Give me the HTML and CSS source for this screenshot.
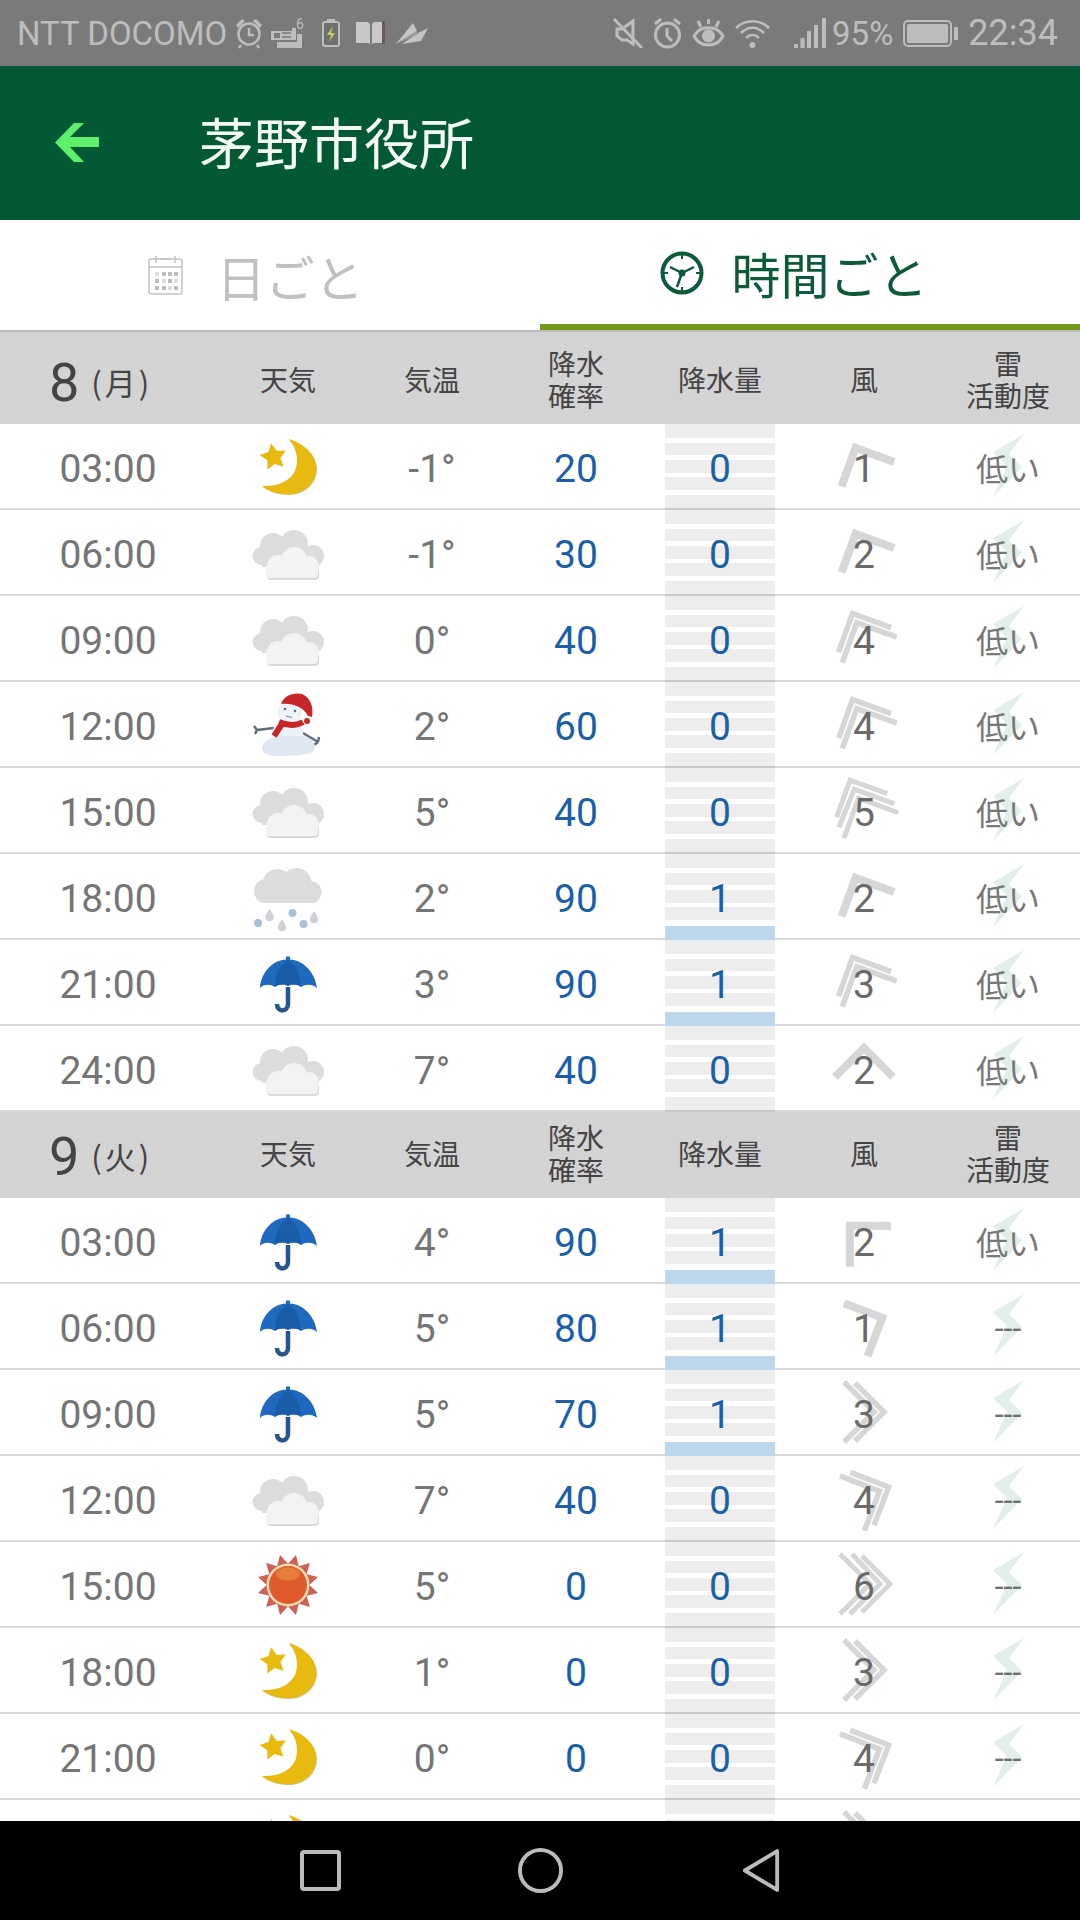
FILE: index.html
```html
<!DOCTYPE html>
<html lang="ja">
<head>
<meta charset="utf-8">
<title>茅野市役所</title>
<link rel="stylesheet" href="styles.css">
</head>
<body>
<!-- Shared icon sprite -->
<svg class="sprite" xmlns="http://www.w3.org/2000/svg">
  <symbol id="w-moon" viewBox="0 0 80 72">
    <path fill="#d9bd62" d="M41 9C60 15 69 27 69 38C69 53 56 64 41 64C31 64 21 61 15 56C31 57 43 51 48 41C52 31 50 18 41 9Z"/>
    <path fill="#e8b90f" d="M41 8C60 14 68 26 68 37C68 52 55 63 40 63C30 63 20 60 14 55C30 56 42 50 47 40C51 30 49 17 41 8Z"/>
    <polygon fill="#e8b90f" points="23.1,12.2 28.6,19.7 37.9,19.4 32.4,27 35.6,35.7 26.7,32.9 19.4,38.6 19.3,29.3 11.6,24.1 20.5,21.1"/>
  </symbol>
  <symbol id="w-cloud" viewBox="0 0 80 72">
    <g fill="#dcdcdc">
      <circle cx="13.5" cy="39" r="9"/><circle cx="25" cy="29" r="13"/><circle cx="46" cy="27" r="14"/><circle cx="65" cy="39" r="11"/>
      <rect x="14" y="30" width="50" height="20"/>
    </g>
    <g fill="#dadada" transform="translate(1 2)">
      <rect x="18" y="48" width="52" height="13" rx="4"/>
    </g>
    <g fill="#f3f3f3">
      <circle cx="30" cy="49" r="11"/><circle cx="46" cy="43" r="13"/><circle cx="61" cy="49" r="10"/>
      <rect x="18" y="46" width="52" height="15" rx="4"/>
    </g>
  </symbol>
  <symbol id="w-rain" viewBox="0 0 80 72">
    <g fill="#dcdcdc">
      <circle cx="18" cy="30" r="12"/><circle cx="29" cy="22" r="14"/><circle cx="48.500" cy="22" r="15"/><circle cx="62.500" cy="31" r="11"/>
      <rect x="8" y="26" width="64" height="16" rx="8"/>
    </g>
    <circle cx="10" cy="62" r="4" fill="#a9c0d6"/>
    <path d="M21.500 48l3.800 6a4.300 4.300 0 1 1-7.600 0z" fill="#cfcfd6"/>
    <path d="M34 58l3.800 6a4.300 4.300 0 1 1-7.600 0z" fill="#cfcfd6"/>
    <circle cx="44.500" cy="52" r="4" fill="#a9c0d6"/>
    <circle cx="55.500" cy="63" r="4" fill="#a9c0d6"/>
    <path d="M66 50l3.800 6a4.300 4.300 0 1 1-7.600 0z" fill="#cfcfd6"/>
  </symbol>
  <symbol id="w-snow" viewBox="0 0 80 72">
    <path d="M9 41l17-2M9 41l-3-4M9 41l-2 4M55 44l15 9M70 53l1-5M70 53l-4 3" fill="none" stroke="#626d7c" stroke-width="2.500"/>
    <circle cx="40" cy="43" r="15" fill="#edf2f8"/>
    <path fill="#dfe8f2" d="M14 60C14 53 22 48 32 47L54 47C62 48 67 53 67 58C67 64 60 65 52 66C40 67 30 68 22 66C17 65 14 63 14 60Z"/>
    <circle cx="42" cy="23" r="12" fill="#eef3f8"/>
    <circle cx="37" cy="20" r="1.300" fill="#5b6b7e"/><circle cx="47" cy="22" r="1.300" fill="#5b6b7e"/>
    <path d="M38 27l6 1.500" stroke="#7c8794" stroke-width="1.200"/>
    <path fill="#c62828" d="M33 15C36 6 46 3 54 5C62 8 66 18 64 28L60 27C56 19 46 14 33 15Z"/>
    <circle cx="59" cy="32" r="3" fill="#c62828"/>
    <path d="M31 33C40 37 48 37 55 33M34 35L26 47" fill="none" stroke="#c62828" stroke-width="6"/>
  </symbol>
  <symbol id="w-umbrella" viewBox="0 0 80 72">
    <path d="M40 40V57C40 65 29 66 29 57" fill="none" stroke="#27568f" stroke-width="4.500"/>
    <path fill="#1f6abf" d="M12 41C13 25 25 13 38 12.500V9.500H42V12.500C55 13 67 25 69 41C64 37 58 37 53 40C49 37 44 37 40 39C36 37 31 37 27 40C22 37 16 37 12 41Z"/>
    <path fill="#1a5ca8" d="M40 13C33 16 27 27 27 40C31 37 36 37 40 39C44 37 49 37 53 40C53 27 47 16 40 13Z"/>
  </symbol>
  <symbol id="w-sun" viewBox="0 0 80 72">
    <g fill="#cf6058">
      <polygon points="34,16 46,16 40,5" transform="rotate(15 40 36)"/><polygon points="34,16 46,16 40,5" transform="rotate(45 40 36)"/>
      <polygon points="34,16 46,16 40,5" transform="rotate(75 40 36)"/><polygon points="34,16 46,16 40,5" transform="rotate(105 40 36)"/>
      <polygon points="34,16 46,16 40,5" transform="rotate(135 40 36)"/><polygon points="34,16 46,16 40,5" transform="rotate(165 40 36)"/>
      <polygon points="34,16 46,16 40,5" transform="rotate(195 40 36)"/><polygon points="34,16 46,16 40,5" transform="rotate(225 40 36)"/>
      <polygon points="34,16 46,16 40,5" transform="rotate(255 40 36)"/><polygon points="34,16 46,16 40,5" transform="rotate(285 40 36)"/>
      <polygon points="34,16 46,16 40,5" transform="rotate(315 40 36)"/><polygon points="34,16 46,16 40,5" transform="rotate(345 40 36)"/>
    </g>
    <circle cx="40" cy="36" r="21.500" fill="#f9dcae"/>
    <circle cx="40" cy="36" r="19" fill="#df5a2d"/>
    <ellipse cx="40" cy="25" rx="12" ry="6.500" fill="#e67c3a"/>
  </symbol>
  <symbol id="wind-1" viewBox="-45 -45 90 90">
    <polyline points="-29,9 0,-20 29,9" fill="none" stroke="#d6d6d6" stroke-width="8"/>
  </symbol>
  <symbol id="wind-2" viewBox="-45 -45 90 90">
    <g fill="none" stroke="#d6d6d6" stroke-width="5.500">
      <polyline points="-29,2 0,-27 29,2"/><polyline points="-30,13 0,-17 30,13"/>
    </g>
  </symbol>
  <symbol id="wind-3" viewBox="-45 -45 90 90">
    <g fill="none" stroke="#d6d6d6" stroke-width="5">
      <polyline points="-28,-5 0,-33 28,-5"/><polyline points="-30,5 0,-23 30,7"/><polyline points="-30,17 0,-13 30,17"/>
    </g>
  </symbol>
  <symbol id="bolt" viewBox="0 0 32 64">
    <polygon points="32,0 1,18 15,32 1,63 30,33 17,20" fill="#e2efe9"/>
  </symbol>
</svg>

<div class="status">
  <div class="status-side">
    <span class="carrier">NTT DOCOMO</span>
    <svg class="st-alarm" viewBox="0 0 28 32"><g fill="none" stroke="#bdbdbd" stroke-width="2.500"><circle cx="14" cy="17" r="10.500"/><path d="M14 11v7h5"/><path d="M6 28l-2 3M22 28l2 3"/></g><path d="M1 8l6-6 3 2-7 7zM27 8l-6-6-3 2 7 7z" fill="#bdbdbd"/></svg>
    <svg class="st-printer" viewBox="0 0 33 30"><path d="M0 13h21v-3h4v12H0z" fill="#bdbdbd"/><rect x="3" y="15" width="6" height="5" fill="#7a7a7a"/><path d="M11 15h9M11 19h9" stroke="#7a7a7a" stroke-width="1.500"/><rect x="6" y="24" width="25" height="6" fill="#bdbdbd"/><rect x="26" y="16" width="5" height="8" fill="#bdbdbd"/><text x="25" y="11" class="st-six">6</text></svg>
    <svg class="st-charge" viewBox="0 0 36 28"><rect x="11" y="3" width="16" height="24" rx="2" fill="#6f6f6f" stroke="#bdbdbd" stroke-width="2"/><rect x="15" y="0" width="8" height="3" fill="#bdbdbd"/><path d="M21 7l-6 9h4l-2 7 6-9h-4z" fill="#c5d04e"/></svg>
    <svg class="st-book" viewBox="0 0 29 24"><path d="M0 1h12l2 2v20l-2-1H0zM16 3l2-2h8v21H18l-2 1z" fill="#c8c8c8"/><path d="M26 0h3v23h-3z" fill="#6f5a50"/></svg>
    <svg class="st-plane" viewBox="0 0 35 23"><path d="M3 22L20 1l4 8zM9 22L25 11l10-5-7 13z" fill="#c4c4c4"/><path d="M3 22l22-10-1-3z" fill="#9a9a9a"/></svg>
  </div>
  <div class="status-side">
    <svg class="st-mute" viewBox="0 0 30 30"><g fill="none" stroke="#bdbdbd" stroke-width="3"><path d="M1 1l28 29"/><path d="M4 11h5l11-8v23l-6-4H9l-5-4z"/></g></svg>
    <svg class="st-alarm2" viewBox="0 0 29 31"><g fill="none" stroke="#bdbdbd" stroke-width="3"><circle cx="14.500" cy="17" r="12"/><path d="M14 10v8l5 5"/><path d="M2 6l6-5M27 6l-6-5"/></g></svg>
    <svg class="st-eye" viewBox="0 0 33 29"><g fill="none" stroke="#bdbdbd" stroke-width="3"><path d="M2 17C8 6 25 6 31 17C25 29 8 29 2 17Z"/><path d="M6 2l3 6M27 2l-3 6M16.500 0v5"/></g><circle cx="16.500" cy="17" r="6.500" fill="#bdbdbd"/></svg>
    <svg class="st-wifi" viewBox="0 0 35 29"><g fill="none" stroke="#bdbdbd" stroke-width="2.500"><path d="M1 9C10 0 25 0 34 9"/><path d="M6 14C13 7 22 7 29 14"/><path d="M11 19C15 15 20 15 24 19"/></g><circle cx="17.500" cy="26" r="3" fill="#bdbdbd"/></svg>
    <svg class="st-signal" viewBox="0 0 32 30"><g fill="#bdbdbd"><rect x="0" y="26" width="4" height="4"/><rect x="6.500" y="20" width="4" height="10"/><rect x="13" y="13" width="4" height="17"/><rect x="20" y="7" width="4" height="23"/><rect x="28" y="0" width="4" height="30"/></g></svg>
    <span class="st-pct">95%</span>
    <svg class="st-batt" viewBox="0 0 55 27"><rect x="1" y="1" width="47" height="25" rx="4" fill="none" stroke="#bdbdbd" stroke-width="2"/><rect x="4" y="4" width="41" height="19" rx="2" fill="#bdbdbd"/><rect x="51" y="7" width="4" height="13" fill="#bdbdbd"/></svg>
    <span class="clock">22:34</span>
  </div>
</div>

<header class="appbar">
  <svg class="back" viewBox="0 0 44 39"><polygon points="0,19.500 19,0 29,0 15,14 44,14 44,24 15,24 29,39 19,39" fill="#5ef06a"/></svg>
  <h1 class="place">茅野市役所</h1>
</header>

<nav class="tabs">
  <div class="tab tab-day">
    <svg class="tab-cal" viewBox="0 0 35 40"><g fill="none" stroke="#c2c2c2" stroke-width="1.500"><rect x="1" y="4" width="33" height="35" rx="2"/><path d="M1 12h33M8 1v7M27 1v7M12 4h11"/></g><g fill="#bdbdbd"><rect x="7" y="17" width="4" height="4" fill="#dedede"/><rect x="14" y="17" width="4" height="4"/><rect x="20" y="17" width="4" height="4"/><rect x="26" y="17" width="4" height="4"/><rect x="7" y="24" width="4" height="4"/><rect x="14" y="24" width="4" height="4" fill="#dedede"/><rect x="20" y="24" width="4" height="4"/><rect x="26" y="24" width="4" height="4" fill="#dedede"/><rect x="7" y="31" width="4" height="4"/><rect x="14" y="31" width="4" height="4"/><rect x="20" y="31" width="4" height="4" fill="#dedede"/><rect x="26" y="31" width="4" height="4"/></g></svg>
    <span class="tab-label">日ごと</span>
  </div>
  <div class="tab tab-hour">
    <svg class="tab-clock" viewBox="0 0 44 44"><circle cx="22" cy="22" r="19.500" fill="none" stroke="#0b5a38" stroke-width="4"/><path d="M22 22L10 16M22 22L34 16M22 22L17 36" stroke="#0b5a38" stroke-width="2.500"/><path d="M22 4v4M22 36v4M4 22h4M36 22h4" stroke="#0b5a38" stroke-width="2"/><circle cx="22" cy="22" r="3.500" fill="#0b5a38"/></svg>
    <span class="tab-label">時間ごと</span>
  </div>
</nav>

<main class="forecast">
  <div class="day day-first">
    <div class="date"><span class="date-num">8</span><span class="date-dow">(月)</span></div>
    <div>天気</div><div>気温</div><div>降水<br>確率</div><div>降水量</div><div>風</div><div>雷<br>活動度</div>
  </div>

  <div class="row">
    <div class="time">03:00</div>
    <div class="cell"><svg class="wx"><use href="#w-moon"/></svg></div>
    <div class="temp">-1°</div><div class="num">20</div>
    <div class="cell rain"><span class="num">0</span></div>
    <div class="cell"><svg class="wind dir-nnw"><use href="#wind-1"/></svg><span class="speed">1</span></div>
    <div class="cell"><svg class="bolt"><use href="#bolt"/></svg><span class="thunder">低い</span></div>
  </div>
  <div class="row">
    <div class="time">06:00</div>
    <div class="cell"><svg class="wx"><use href="#w-cloud"/></svg></div>
    <div class="temp">-1°</div><div class="num">30</div>
    <div class="cell rain"><span class="num">0</span></div>
    <div class="cell"><svg class="wind dir-nnw"><use href="#wind-1"/></svg><span class="speed">2</span></div>
    <div class="cell"><svg class="bolt"><use href="#bolt"/></svg><span class="thunder">低い</span></div>
  </div>
  <div class="row">
    <div class="time">09:00</div>
    <div class="cell"><svg class="wx"><use href="#w-cloud"/></svg></div>
    <div class="temp">0°</div><div class="num">40</div>
    <div class="cell rain"><span class="num">0</span></div>
    <div class="cell"><svg class="wind dir-nnw"><use href="#wind-2"/></svg><span class="speed">4</span></div>
    <div class="cell"><svg class="bolt"><use href="#bolt"/></svg><span class="thunder">低い</span></div>
  </div>
  <div class="row">
    <div class="time">12:00</div>
    <div class="cell"><svg class="wx"><use href="#w-snow"/></svg></div>
    <div class="temp">2°</div><div class="num">60</div>
    <div class="cell rain"><span class="num">0</span></div>
    <div class="cell"><svg class="wind dir-nnw"><use href="#wind-2"/></svg><span class="speed">4</span></div>
    <div class="cell"><svg class="bolt"><use href="#bolt"/></svg><span class="thunder">低い</span></div>
  </div>
  <div class="row">
    <div class="time">15:00</div>
    <div class="cell"><svg class="wx"><use href="#w-cloud"/></svg></div>
    <div class="temp">5°</div><div class="num">40</div>
    <div class="cell rain"><span class="num">0</span></div>
    <div class="cell"><svg class="wind dir-nnw"><use href="#wind-3"/></svg><span class="speed">5</span></div>
    <div class="cell"><svg class="bolt"><use href="#bolt"/></svg><span class="thunder">低い</span></div>
  </div>
  <div class="row">
    <div class="time">18:00</div>
    <div class="cell"><svg class="wx"><use href="#w-rain"/></svg></div>
    <div class="temp">2°</div><div class="num">90</div>
    <div class="cell rain wet"><span class="num">1</span></div>
    <div class="cell"><svg class="wind dir-nnw"><use href="#wind-1"/></svg><span class="speed">2</span></div>
    <div class="cell"><svg class="bolt"><use href="#bolt"/></svg><span class="thunder">低い</span></div>
  </div>
  <div class="row">
    <div class="time">21:00</div>
    <div class="cell"><svg class="wx"><use href="#w-umbrella"/></svg></div>
    <div class="temp">3°</div><div class="num">90</div>
    <div class="cell rain wet"><span class="num">1</span></div>
    <div class="cell"><svg class="wind dir-nnw"><use href="#wind-2"/></svg><span class="speed">3</span></div>
    <div class="cell"><svg class="bolt"><use href="#bolt"/></svg><span class="thunder">低い</span></div>
  </div>
  <div class="row">
    <div class="time">24:00</div>
    <div class="cell"><svg class="wx"><use href="#w-cloud"/></svg></div>
    <div class="temp">7°</div><div class="num">40</div>
    <div class="cell rain"><span class="num">0</span></div>
    <div class="cell"><svg class="wind dir-n"><use href="#wind-1"/></svg><span class="speed">2</span></div>
    <div class="cell"><svg class="bolt"><use href="#bolt"/></svg><span class="thunder">低い</span></div>
  </div>

  <div class="day">
    <div class="date"><span class="date-num">9</span><span class="date-dow">(火)</span></div>
    <div>天気</div><div>気温</div><div>降水<br>確率</div><div>降水量</div><div>風</div><div>雷<br>活動度</div>
  </div>

  <div class="row">
    <div class="time">03:00</div>
    <div class="cell"><svg class="wx"><use href="#w-umbrella"/></svg></div>
    <div class="temp">4°</div><div class="num">90</div>
    <div class="cell rain wet"><span class="num">1</span></div>
    <div class="cell"><svg class="wind dir-nw"><use href="#wind-1"/></svg><span class="speed">2</span></div>
    <div class="cell"><svg class="bolt"><use href="#bolt"/></svg><span class="thunder">低い</span></div>
  </div>
  <div class="row">
    <div class="time">06:00</div>
    <div class="cell"><svg class="wx"><use href="#w-umbrella"/></svg></div>
    <div class="temp">5°</div><div class="num">80</div>
    <div class="cell rain wet"><span class="num">1</span></div>
    <div class="cell"><svg class="wind dir-ene"><use href="#wind-1"/></svg><span class="speed">1</span></div>
    <div class="cell"><svg class="bolt"><use href="#bolt"/></svg><span class="thunder-none">---</span></div>
  </div>
  <div class="row">
    <div class="time">09:00</div>
    <div class="cell"><svg class="wx"><use href="#w-umbrella"/></svg></div>
    <div class="temp">5°</div><div class="num">70</div>
    <div class="cell rain wet"><span class="num">1</span></div>
    <div class="cell"><svg class="wind dir-e"><use href="#wind-2"/></svg><span class="speed">3</span></div>
    <div class="cell"><svg class="bolt"><use href="#bolt"/></svg><span class="thunder-none">---</span></div>
  </div>
  <div class="row">
    <div class="time">12:00</div>
    <div class="cell"><svg class="wx"><use href="#w-cloud"/></svg></div>
    <div class="temp">7°</div><div class="num">40</div>
    <div class="cell rain"><span class="num">0</span></div>
    <div class="cell"><svg class="wind dir-ene"><use href="#wind-2"/></svg><span class="speed">4</span></div>
    <div class="cell"><svg class="bolt"><use href="#bolt"/></svg><span class="thunder-none">---</span></div>
  </div>
  <div class="row">
    <div class="time">15:00</div>
    <div class="cell"><svg class="wx"><use href="#w-sun"/></svg></div>
    <div class="temp">5°</div><div class="num">0</div>
    <div class="cell rain"><span class="num">0</span></div>
    <div class="cell"><svg class="wind dir-e"><use href="#wind-3"/></svg><span class="speed">6</span></div>
    <div class="cell"><svg class="bolt"><use href="#bolt"/></svg><span class="thunder-none">---</span></div>
  </div>
  <div class="row">
    <div class="time">18:00</div>
    <div class="cell"><svg class="wx"><use href="#w-moon"/></svg></div>
    <div class="temp">1°</div><div class="num">0</div>
    <div class="cell rain"><span class="num">0</span></div>
    <div class="cell"><svg class="wind dir-e"><use href="#wind-2"/></svg><span class="speed">3</span></div>
    <div class="cell"><svg class="bolt"><use href="#bolt"/></svg><span class="thunder-none">---</span></div>
  </div>
  <div class="row">
    <div class="time">21:00</div>
    <div class="cell"><svg class="wx"><use href="#w-moon"/></svg></div>
    <div class="temp">0°</div><div class="num">0</div>
    <div class="cell rain"><span class="num">0</span></div>
    <div class="cell"><svg class="wind dir-ene"><use href="#wind-2"/></svg><span class="speed">4</span></div>
    <div class="cell"><svg class="bolt"><use href="#bolt"/></svg><span class="thunder-none">---</span></div>
  </div>
  <div class="row">
    <div class="time"></div>
    <div class="cell"><svg class="wx"><use href="#w-moon"/></svg></div>
    <div class="temp"></div><div class="num"></div>
    <div class="cell rain"></div>
    <div class="cell"><svg class="wind dir-e"><use href="#wind-2"/></svg></div>
    <div class="cell"></div>
  </div>
</main>

<footer class="navbar">
  <svg class="nav-square" viewBox="0 0 41 41"><rect x="2" y="2" width="37" height="37" rx="2" fill="none" stroke="#bbb" stroke-width="4"/></svg>
  <svg class="nav-home" viewBox="0 0 46 46"><ellipse cx="23" cy="23" rx="21" ry="21" fill="none" stroke="#bbb" stroke-width="4"/></svg>
  <svg class="nav-back" viewBox="0 0 40 46"><polygon points="37,2.500 37,43.500 3,23" fill="none" stroke="#bbb" stroke-width="4" stroke-linejoin="round"/></svg>
</footer>
</body>
</html>
```
FILE: styles.css
```css
* { box-sizing: border-box; }

html, body {
  margin: 0;
  height: 1920px;
  width: 1080px;
}

body {
  display: flex;
  flex-direction: column;
  overflow: hidden;
  background: #fff;
  font-family: Roboto, "Noto Sans CJK JP", sans-serif;
}

.sprite { display: none; }

/* Status bar */
.status {
  height: 66px;
  flex: none;
  display: flex;
  justify-content: space-between;
  align-items: center;
  padding: 0 22px 0 17px;
  background: #7a7a7a;
  color: #bdbdbd;
}

.status-side {
  display: flex;
  align-items: center;
  gap: 10px;
}

.carrier { font-size: 33px; margin-right: -2px; }
.st-six { font: 14px Roboto, sans-serif; fill: #bdbdbd; }

.st-alarm { width: 28px; height: 32px; }
.st-printer { width: 33px; height: 30px; margin-left: -2px; overflow: visible; }
.st-charge { width: 36px; height: 28px; margin-left: -2px; }
.st-book { width: 29px; height: 24px; margin-left: -2px; }
.st-plane { width: 35px; height: 23px; margin-left: -2px; }

.st-mute { width: 30px; height: 30px; }
.st-alarm2 { width: 29px; height: 31px; }
.st-eye { width: 33px; height: 29px; }
.st-wifi { width: 35px; height: 29px; }
.st-signal { width: 32px; height: 30px; margin-left: 14px; }
.st-pct { font-size: 33px; margin-left: -4px; }
.st-batt { width: 55px; height: 27px; }
.clock { font-size: 36px; }

/* App bar */
.appbar {
  height: 154px;
  flex: none;
  display: flex;
  align-items: center;
  padding-left: 55px;
  background: #025933;
}

.back { width: 44px; height: 39px; margin-top: -2px; }

.place {
  margin: -6px 0 0 100px;
  font-family: "Noto Sans CJK JP", sans-serif;
  font-size: 55px;
  font-weight: 400;
  color: #f4fbf6;
}

/* Tabs */
.tabs {
  height: 112px;
  flex: none;
  display: grid;
  grid-template-columns: 1fr 1fr;
  border-bottom: 2px solid #bdbdbd;
  font-family: "Noto Sans CJK JP", sans-serif;
  font-size: 49px;
}

.tab {
  display: flex;
  align-items: center;
  justify-content: center;
  padding-bottom: 6px;
}

.tab-label { margin-top: 6px; }

.tab-day { gap: 33px; padding-right: 28px; color: #c0c0c0; }
.tab-hour {
  gap: 27px;
  padding-right: 32px;
  color: #0b5a38;
  border-bottom: 6px solid #6f9a1a;
}

.tab-cal { width: 35px; height: 40px; margin-top: 5px; }
.tab-clock { width: 44px; height: 44px; margin-top: 8px; }

/* Forecast table */
.forecast {
  flex: 1;
  min-height: 0;
  overflow: hidden;
}

.day, .row {
  display: grid;
  grid-template-columns: 216px repeat(6, 144px);
  height: 86px;
}

.day {
  align-items: center;
  justify-items: center;
  padding-bottom: 4px;
  background: #d3d3d3;
  color: #444;
  font-family: "Noto Sans CJK JP", sans-serif;
  font-size: 28px;
  line-height: 32px;
  text-align: center;
}

.day-first { height: 92px; padding-top: 6px; }

.date {
  justify-self: start;
  display: flex;
  align-items: center;
  padding-left: 49px;
}

.date-num {
  font-family: Roboto, sans-serif;
  font-size: 54px;
  line-height: 54px;
  margin-top: 8px;
}

.date-dow { font-size: 31px; letter-spacing: 3px; margin-left: 12px; margin-top: 6px; }

.row {
  grid-template-rows: 84px;
  align-items: center;
  justify-items: center;
  border-bottom: 2px solid #d9d9d9;
  font-size: 39px;
  color: #757575;
}

.time, .temp, .row > .num { padding-top: 5px; }

.cell {
  display: grid;
  grid-template-rows: 84px;
  place-items: center;
  align-self: stretch;
  justify-self: stretch;
}

/* Overlaid layers within one cell share a single grid slot */
.cell > * { grid-area: 1 / 1; }

.num { color: #1b5fa8; }

.rain {
  justify-self: center;
  width: 110px;
  margin-bottom: -2px;
  background-image: linear-gradient(to bottom,
    rgba(0, 0, 0, .07) 0 14px, transparent 14px 18.8px,
    rgba(0, 0, 0, .07) 18.8px 31.3px, transparent 31.3px 36px,
    rgba(0, 0, 0, .07) 36px 48.7px, transparent 48.7px 53.3px,
    rgba(0, 0, 0, .07) 53.3px 66px, transparent 66px 70.7px,
    rgba(0, 0, 0, .07) 70.7px 86px);
}

.rain .num { padding-top: 5px; }

.wet {
  background-image:
    linear-gradient(to bottom, transparent 72px, #bdd7ec 72px),
    linear-gradient(to bottom,
      rgba(0, 0, 0, .07) 0 14px, transparent 14px 18.8px,
      rgba(0, 0, 0, .07) 18.8px 31.3px, transparent 31.3px 36px,
      rgba(0, 0, 0, .07) 36px 48.7px, transparent 48.7px 53.3px,
      rgba(0, 0, 0, .07) 53.3px 66px, transparent 66px 70.7px,
      transparent 70.7px);
}

.wx { width: 80px; height: 72px; margin-top: 1px; }

.wind { width: 90px; height: 90px; overflow: visible; }
.dir-n { transform: rotate(0deg); }
.dir-nnw { transform: rotate(-25deg); }
.dir-nw { transform: rotate(-45deg); }
.dir-ene { transform: rotate(66deg); }
.dir-e { transform: translateX(-7px) rotate(90deg); }

.speed { position: relative; padding-top: 5px; color: #6a6a6a; }

.bolt { width: 32px; height: 64px; }

.thunder {
  position: relative;
  padding-top: 2px;
  font-family: "Noto Sans CJK JP", sans-serif;
  font-size: 32px;
  color: #777;
}

.thunder-none {
  position: relative;
  font-size: 32px;
  color: #6e6e6e;
  margin-top: 4px;
}

/* Navigation bar */
.navbar {
  height: 99px;
  flex: none;
  display: grid;
  grid-template-columns: 300px 41px 177px 45px 179px 38px 1fr;
  align-items: center;
  background: #000;
}

.nav-square { grid-column: 2; width: 41px; height: 41px; }
.nav-home { grid-column: 4; width: 45px; height: 45px; }
.nav-back { grid-column: 6; width: 38px; height: 45px; }
```
